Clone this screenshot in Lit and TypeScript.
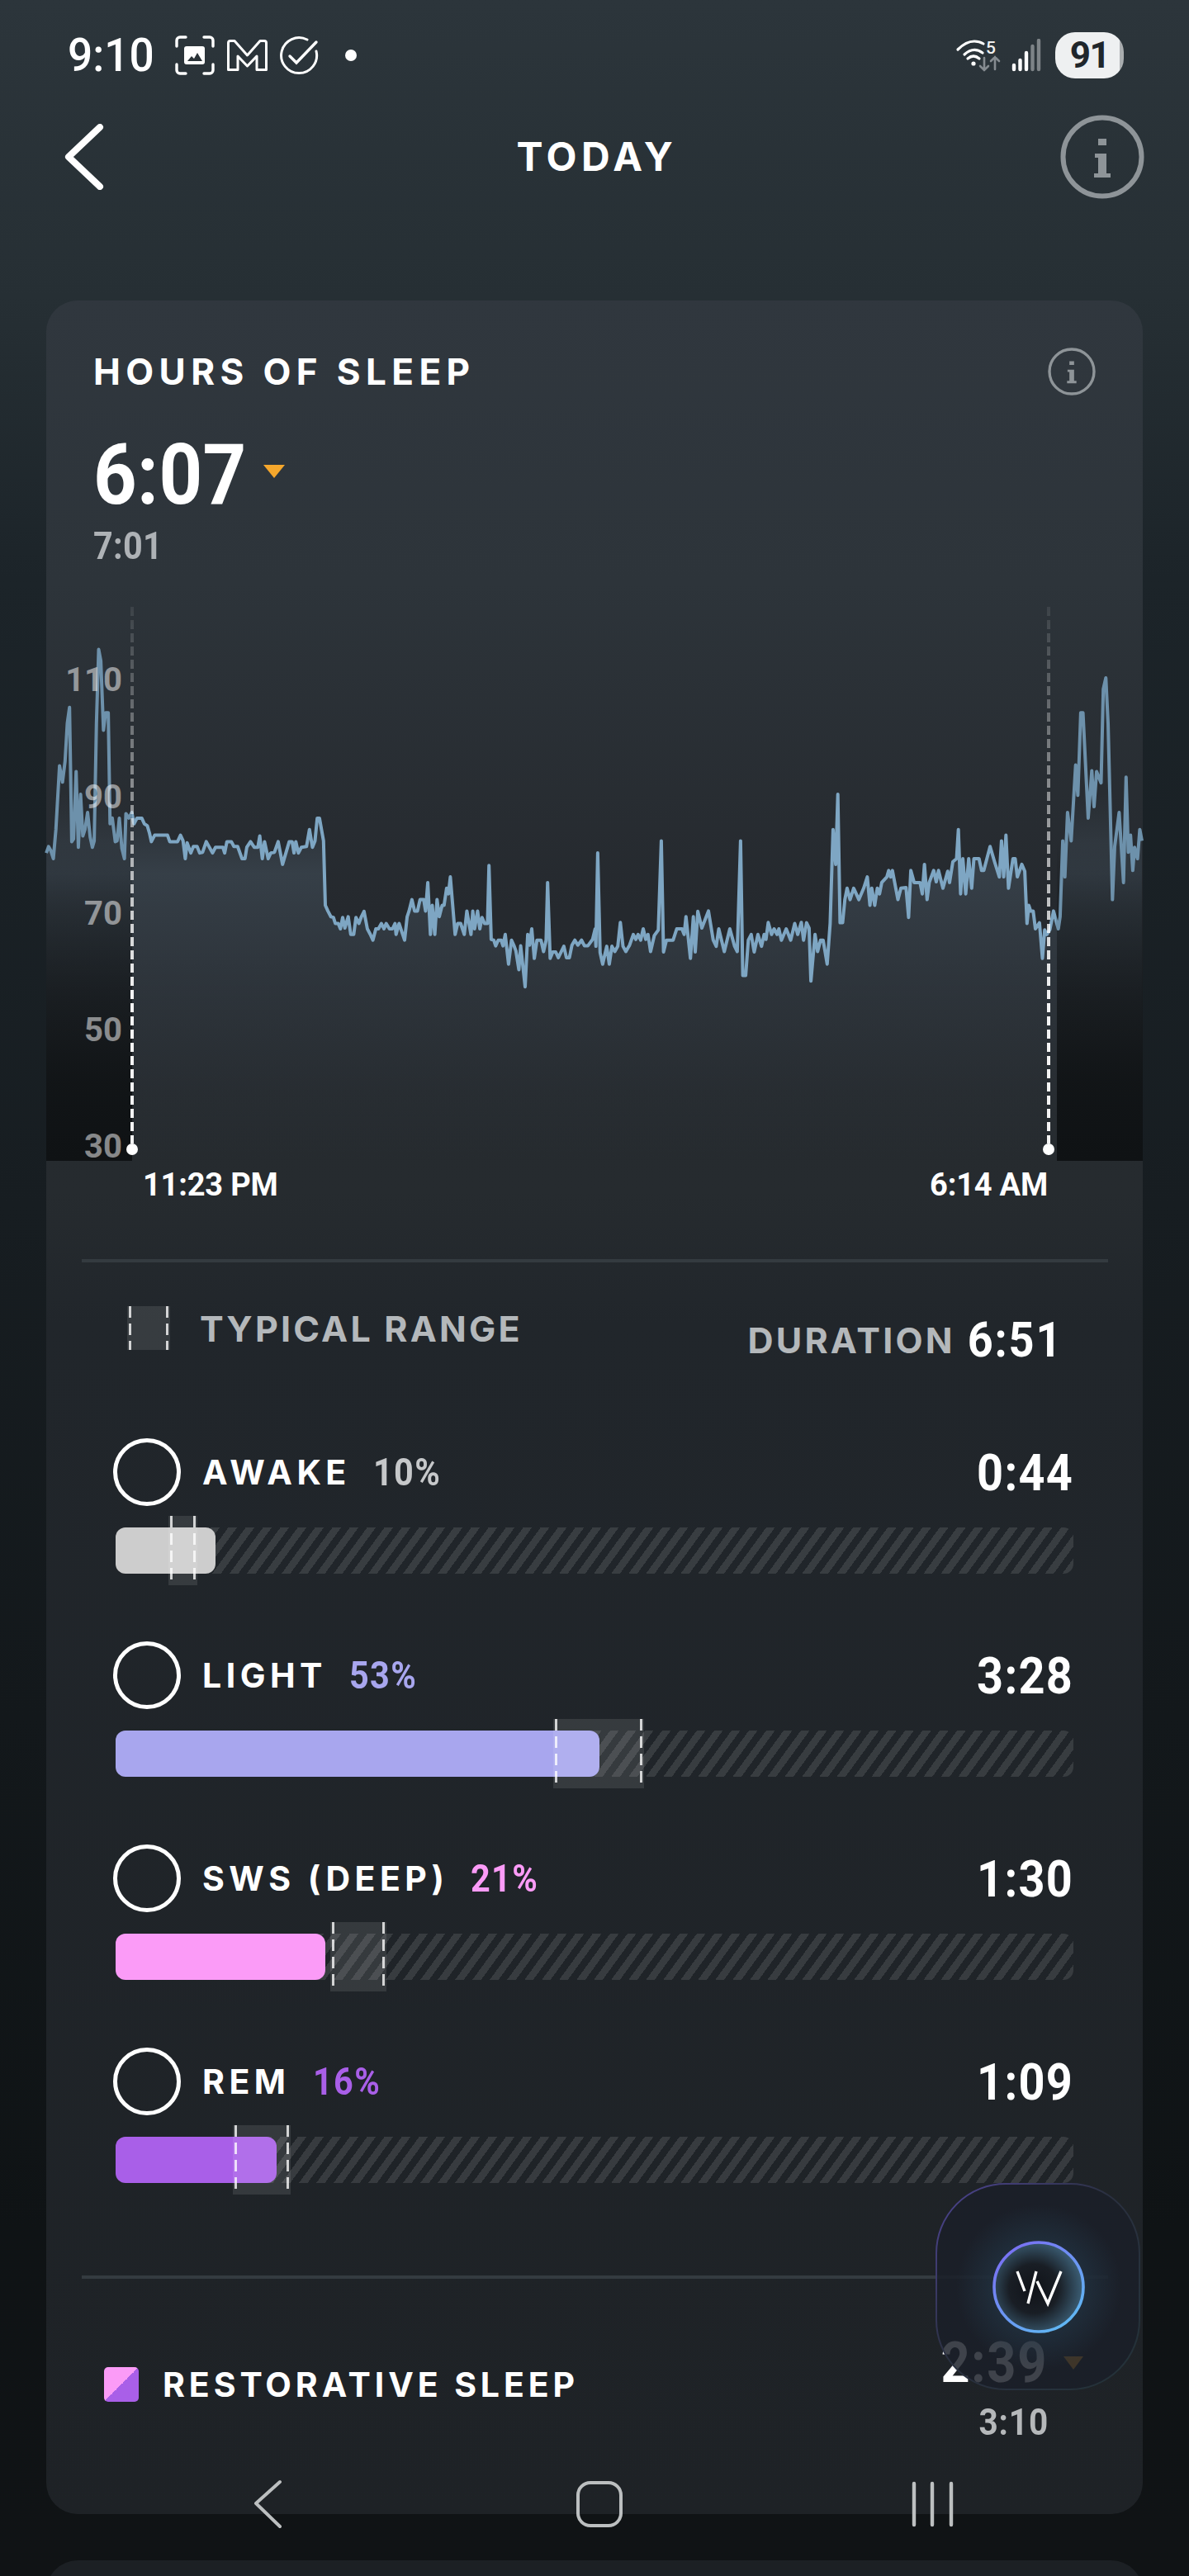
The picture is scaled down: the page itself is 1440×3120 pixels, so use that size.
import { LitElement, html, css, svg } from 'lit';
import { customElement } from 'lit/decorators.js';

interface StageRow {
  label: string;
  pct: string;
  value: string;
  color: string;
  pctColor: string;
  fill: number;
  rangeLeft: number;
  rangeWidth: number;
}

const TRACK_WIDTH = 1160;

const STAGES: StageRow[] = [
  { label: 'AWAKE', pct: '10%', value: '0:44', color: '#cdcdcd', pctColor: '#c6c8ca', fill: 121, rangeLeft: 64, rangeWidth: 35 },
  { label: 'LIGHT', pct: '53%', value: '3:28', color: '#a8a6ee', pctColor: '#a8a6ee', fill: 586, rangeLeft: 530, rangeWidth: 110 },
  { label: 'SWS (DEEP)', pct: '21%', value: '1:30', color: '#fb9bf7', pctColor: '#fb9bf7', fill: 254, rangeLeft: 260, rangeWidth: 68 },
  { label: 'REM', pct: '16%', value: '1:09', color: '#a95fe8', pctColor: '#a95fe8', fill: 195, rangeLeft: 142, rangeWidth: 70 },
];

// traced from the chart, [x, y] in crop units, see toPage()
const LEFT_TRACE = [36,682,42,665,48,675,55,697,62,620,72,452,80,495,87,440,93,340,99,298,105,652,110,645,117,467,123,667,129,527,135,637,141,620,148,575,155,640,161,667,166,650,172,340,178,145,184,175,191,358,197,312,204,312,209,605,215,590,223,652,228,650,234,590,241,670,248,697,252,578,260,590,268,575,274,605,282,590,295,590,302,605,310,610,316,630,321,652,330,635,365,635,371,652,392,652,400,635,407,650,413,697,418,655,428,682,435,665,445,665,452,682,460,680,470,652,487,682,495,667,515,667,520,682,526,652,538,652,545,665,555,665,567,697,575,697,580,667,590,652,600,667,610,667,615,637,622,697,628,652,638,697,645,682,655,680,665,652,677,712,695,652,703,652,708,682,713,652,720,682,728,667,742,665,750,620,758,667,765,650,771,590,777,590,788,650,793,820,800,835,808,850,815,852,820,868,828,868,834,882,840,852,846,880,855,850,862,897,870,897,876,852,884,868,890,852,898,836,907,882,915,897,922,912,930,882,937,882,945,868,952,882,958,868,967,882,975,882,982,868,985,897,993,868,1008,912,1015,850,1020,835,1028,805,1035,835,1043,835,1050,805,1060,805,1065,835,1071,760,1078,897,1083,820,1090,897,1096,805,1102,850,1110,820,1115,820,1122,775,1127,790,1132,745,1145,897,1152,868,1160,868,1170,897,1177,835,1188,897,1193,835,1198,882,1206,835,1212,882,1218,852,1225,868,1233,868,1237,715,1243,910,1250,912,1255,927,1262,912,1270,912,1275,927,1281,897,1290,975,1298,912,1305,927,1310,940,1318,990,1323,927,1335,1035,1342,897,1347,925,1353,882,1360,960,1367,912,1378,912,1385,942,1392,912,1396,760,1403,960,1410,943,1418,943,1425,958,1440,928,1447,958,1455,958,1462,925,1470,912,1478,925,1488,912,1496,927,1505,927,1518,910,1525,882,1527,928,1532,682];

const RIGHT_TRACE = [60,945,67,975,78,928,85,975,92,928,100,942,108,928,115,865,122,928,130,942,140,925,150,897,157,910,163,897,170,912,177,882,184,910,190,897,197,942,207,900,218,885,226,650,232,943,240,912,258,912,268,882,282,882,288,897,293,850,305,960,313,850,318,943,325,836,336,880,354,835,367,912,375,928,382,882,397,942,412,882,425,928,432,942,441,650,447,1005,455,1005,462,912,470,897,478,943,488,897,498,928,505,897,510,910,516,865,525,897,532,882,540,897,545,882,552,912,565,882,577,912,588,868,596,897,606,865,612,912,620,866,627,880,632,1020,643,897,650,942,658,912,665,912,676,975,684,868,692,620,699,712,705,527,711,866,718,866,724,805,730,775,738,805,748,775,762,805,775,775,785,745,792,820,797,775,805,820,812,775,818,790,824,760,838,745,843,728,848,745,853,728,868,805,876,775,890,773,897,852,903,728,912,760,928,760,934,790,940,712,947,805,953,760,965,728,972,758,978,728,990,775,1003,730,1008,760,1017,705,1027,697,1032,620,1038,790,1044,697,1052,790,1060,697,1068,775,1074,697,1088,697,1095,728,1101,728,1118,665,1130,705,1143,745,1149,650,1155,745,1161,635,1168,775,1180,697,1186,697,1192,745,1204,712,1212,730,1218,868,1223,820,1228,835,1235,835,1241,882,1252,866,1260,960,1266,885,1272,897,1280,885,1290,835,1303,882,1308,850,1315,650,1321,745,1328,575,1338,650,1350,450,1356,530,1364,312,1370,312,1384,590,1394,465,1400,560,1407,467,1419,497,1425,250,1432,220,1438,340,1450,805,1456,665,1468,575,1480,760,1487,482,1493,680,1499,635,1505,728,1510,667,1518,697,1524,620,1530,650];

function toPage(trace: number[], originX: number): string[] {
  const out: string[] = [];
  for (let i = 0; i < trace.length; i += 2) {
    out.push(`${(originX + trace[i] / 2.24).toFixed(1)},${(720 + trace[i + 1] / 2.178).toFixed(1)}`);
  }
  return out;
}

const LINE = [...toPage(LEFT_TRACE, 40), ...toPage(RIGHT_TRACE, 700)].join(' ');
const AREA = `56,1406 ${LINE} 1384,1406`;

const AXIS = [
  { label: '110', y: 823 },
  { label: '90', y: 965 },
  { label: '70', y: 1106 },
  { label: '50', y: 1247 },
  { label: '30', y: 1388 },
];

@customElement('app-root')
export class AppRoot extends LitElement {
  static styles = css`
    :host {
      display: block;
      position: relative;
      width: 1440px;
      height: 3120px;
      overflow: hidden;
      font-family: 'Inter', 'Lato', sans-serif;
      color: #fff;
      background: linear-gradient(180deg, #2c353b 0, #262f34 360px, #1c2429 700px, #171d21 1460px, #0f1315 2700px, #101315 3120px);
    }
    svg { display: block; flex: none; }
    .num { font-family: 'Roboto', sans-serif; font-weight: 700; }
    /* the app's digits are narrower than Roboto */
    .narrow { display: inline-block; transform: scaleX(0.9); transform-origin: left center; }
    .narrow.end { transform-origin: right center; }

    .status {
      height: 134px;
      padding: 0 79px 0 82px;
      display: flex;
      align-items: center;
      justify-content: space-between;
    }
    .status-left, .status-right { display: flex; align-items: center; }
    .clock {
      font-family: 'Roboto', sans-serif;
      font-weight: 500;
      font-size: 56px;
      line-height: 60px;
      width: 130px;
      display: inline-block;
      transform: scaleX(0.95);
      transform-origin: left center;
    }
    .battery {
      width: 83px;
      height: 56px;
      margin-left: 17px;
      border-radius: 24px;
      background: linear-gradient(90deg, #eef0f1 94%, #a9adaf 94%);
      color: #1f262b;
      font-family: 'Roboto', sans-serif;
      font-weight: 700;
      font-size: 44px;
      letter-spacing: -1.5px;
      line-height: 56px;
      text-align: center;
    }

    .nav {
      height: 112px;
      padding: 0 54px;
      display: grid;
      grid-template-columns: 1fr auto 1fr;
      align-items: center;
    }
    .nav .back { margin-left: 24px; }
    .nav .info { justify-self: end; }
    .nav h1 {
      margin: 0;
      padding-left: 6px;
      font-size: 48px;
      font-weight: 700;
      letter-spacing: 5.5px;
      line-height: 60px;
    }

    .card {
      margin: 118px 56px 0;
      border-radius: 38px;
      padding-bottom: 87px;
      background: linear-gradient(180deg, #30373e 0, #2d343a 340px, #25292e 740px, #262b2f 1080px, #21262b 1240px, #1e2226 2681px);
    }
    .card-title {
      height: 56px;
      padding: 58px 57px 1px;
      display: flex;
      align-items: center;
      justify-content: space-between;
    }
    .card-title h2 {
      margin: 0;
      font-size: 44px;
      font-weight: 700;
      letter-spacing: 6.4px;
    }
    .score {
      margin: 51px 0 0 57px;
      height: 90px;
      display: flex;
      align-items: center;
      gap: 0;
    }
    .score .num {
      font-size: 102px;
      line-height: 90px;
      letter-spacing: 0.5px;
    }
    .tri {
      width: 0;
      height: 0;
      border-left: 13px solid transparent;
      border-right: 13px solid transparent;
      border-top: 16px solid #f5a72c;
      margin-bottom: 8px;
    }
    .prev {
      margin: 17px 0 35px 57px;
      height: 48px;
      font-size: 46px;
      line-height: 48px;
      letter-spacing: 0.3px;
      color: #aeb2b6;
    }
    .prev .narrow { display: block; }
    .chart-label {
      font-family: 'Roboto', sans-serif;
      font-weight: 700;
      font-size: 40px;
      fill: rgba(255, 255, 255, 0.5);
    }
    .times {
      height: 58px;
      padding: 0 115px 0 117px;
      display: flex;
      align-items: center;
      justify-content: space-between;
      font-size: 38px;
      letter-spacing: -0.2px;
    }
    .rule {
      height: 4px;
      background: #343b40;
      margin-left: 43px;
      margin-right: 42px;
    }
    .legend {
      margin-top: 53px;
      padding: 0 97px 0 98px;
      height: 53px;
      display: flex;
      justify-content: space-between;
    }
    .legend-left { display: flex; align-items: center; gap: 36px; }
    .legend-left span, .duration span {
      font-size: 43px;
      font-weight: 700;
      letter-spacing: 3.2px;
      color: #b4b8bb;
    }
    .duration {
      height: 53px;
      margin-top: 14px;
      display: flex;
      align-items: center;
      gap: 2px;
    }
    .duration .num { font-size: 60px; letter-spacing: 2px; }

    .range-key, .range {
      background: rgba(255, 255, 255, 0.1);
    }
    .range-key {
      position: relative;
      width: 52px;
      height: 53px;
    }
    .range-key::before, .range-key::after, .range::before, .range::after {
      content: '';
      position: absolute;
      top: 0;
      bottom: 0;
      width: 3px;
      background: repeating-linear-gradient(180deg, rgba(255, 255, 255, 0.78) 0 14px, transparent 14px 21px);
    }
    .range-key::before, .range::before { left: 2px; }
    .range-key::after, .range::after { right: 2px; }

    .stages {
      margin-top: 107px;
      padding: 0 84px;
      display: flex;
      flex-direction: column;
      gap: 82px;
    }
    .stage-head {
      height: 82px;
      display: flex;
      align-items: center;
      margin-left: -3px;
    }
    .ring {
      width: 82px;
      height: 82px;
      box-sizing: border-box;
      border: 5px solid #fff;
      border-radius: 50%;
      margin-right: 26px;
    }
    .stage-name {
      font-size: 41px;
      font-weight: 700;
      letter-spacing: 5.5px;
      margin-right: 27px;
    }
    .stage-pct {
      font-family: 'Roboto', sans-serif;
      font-weight: 700;
      font-size: 46px;
      letter-spacing: 1.5px;
    }
    .stage-value { margin-left: auto; font-size: 62px; letter-spacing: 1.5px; }
    .track {
      position: relative;
      height: 56px;
      margin-top: 26px;
      border-radius: 12px;
      background: repeating-linear-gradient(126deg, transparent 0 8.5px, rgba(255, 255, 255, 0.11) 8.5px 17px);
    }
    .fill { height: 100%; border-radius: 12px; }
    .range { position: absolute; top: -14px; bottom: -14px; }

    .rule-2 { margin-top: 112px; }
    .restorative {
      margin-top: 72px;
      padding: 0 72px 0 70px;
      display: flex;
      justify-content: space-between;
      align-items: center;
    }
    .restorative-left {
      display: flex;
      align-items: center;
      gap: 29px;
      padding-bottom: 14px;
    }
    .swatch {
      width: 42px;
      height: 42px;
      border-radius: 5px;
      background: linear-gradient(to bottom right, #fb9bf7 50%, #a95fe8 50%);
    }
    .restorative-left span {
      font-size: 41px;
      font-weight: 700;
      letter-spacing: 4.9px;
    }
    .restorative-right { display: flex; flex-direction: column; align-items: flex-end; }
    .restorative-main { height: 60px; display: flex; align-items: center; gap: 19px; }
    .restorative-main .num { font-size: 68px; letter-spacing: 2px; }
    .restorative-main .tri { margin: 0; border-left-width: 12px; border-right-width: 12px; }
    .restorative-prev {
      margin: 18px 42px 0 0;
      font-size: 45px;
      line-height: 48px;
      letter-spacing: 1px;
      color: #b5b8ba;
    }

    .next-card {
      margin: 56px 56px 0;
      height: 120px;
      border-radius: 38px;
      background: #1c2024;
    }
    .bubble { position: absolute; left: 1133px; top: 2644px; }
    .softkeys { position: absolute; left: 300px; top: 3000px; }
  `;

  private backIcon() {
    return html`<svg class="back" width="50" height="80" viewBox="78 150 50 80" fill="none" stroke="#fff" stroke-width="8" stroke-linecap="round" stroke-linejoin="round">
      <path d="M121 154 L83 190 L121 226" />
    </svg>`;
  }

  private infoIcon(size: number, color: string) {
    return html`<svg width="${size}" height="${size}" viewBox="0 0 102 102">
      <circle cx="51" cy="51" r="47.5" fill="none" stroke="${color}" stroke-width="6" />
      <path fill="${color}" d="M46 29h10v8H46z M42 47h14v24h5v5H41v-5h5V52h-4z" />
    </svg>`;
  }

  private statusLeft() {
    return html`
      <svg width="48" height="48" viewBox="0 0 48 48" fill="none" stroke="#fff" stroke-width="3.4" stroke-linecap="round">
        <path d="M2 13V6a4 4 0 0 1 4-4h7 M35 2h7a4 4 0 0 1 4 4v7 M46 35v7a4 4 0 0 1-4 4h-7 M13 46H6a4 4 0 0 1-4-4v-7" />
        <rect x="11" y="13" width="25" height="22" rx="3" fill="#fff" stroke="none" />
        <path d="M15 31 L20 25 L23 28 L27 21 L33 31Z" fill="#2a3338" stroke="none" />
      </svg>
      <svg style="margin-left:15px" width="49" height="38" viewBox="0 0 49 38" fill="none" stroke="#fff" stroke-width="3" stroke-linejoin="round">
        <path d="M1.5 4Q1.5 1.5 4 1.5H9L24.5 19 40 1.5h5Q47.5 1.5 47.5 4V36.5H36V20L24.5 32 13 20V36.5H1.5Z" />
      </svg>
      <svg style="margin-left:14px" width="48" height="48" viewBox="0 0 48 48" fill="none" stroke="#fff" stroke-width="3" stroke-linecap="round">
        <path d="M34 5A21.5 21.5 0 1 0 45 19" />
        <path d="M13 25 L21 33 L45 8" stroke-width="3.4" />
      </svg>
      <svg style="margin-left:32px" width="14" height="14" viewBox="0 0 14 14"><circle cx="7" cy="7" r="7" fill="#fff" /></svg>
    `;
  }

  private statusRight() {
    return html`
      <svg width="57" height="42" viewBox="1155 48 57 42" fill="none" stroke="#fff" stroke-width="3.2" stroke-linecap="round">
        <path d="M1160 62Q1170 52 1180 52 1186 52 1191 55" />
        <path d="M1168 68Q1179 58 1190 66" />
        <path d="M1172 73Q1179 67 1186 73" />
        <circle cx="1179" cy="79" r="2.6" fill="#fff" stroke="none" />
        <text x="1194" y="67" font-family="Roboto" font-weight="500" font-size="21" fill="#f0f0f0" stroke="none">5</text>
        <g stroke="#858b90" stroke-width="2.6">
          <path d="M1192 72V87 M1187 82L1192 87 1197 82" />
          <path d="M1205 86V71 M1200 76L1205 71 1210 76" />
        </g>
      </svg>
      <svg style="margin-left:13px" width="36" height="40" viewBox="1225 48 36 40" stroke-width="4.4" stroke-linecap="round">
        <path stroke="#fff" d="M1228 85V80 M1235.500 85V74 M1243 85V65" />
        <path stroke="#7d8387" d="M1250.500 85V57 M1258 85V50" />
      </svg>
    `;
  }

  private chart() {
    return html`<svg width="1328" height="686" viewBox="56 720 1328 686" style="overflow:visible">
      <defs>
        <linearGradient id="area" gradientUnits="userSpaceOnUse" x1="0" x2="0" y1="960" y2="1406">
          <stop offset="0" stop-color="#3c4751" stop-opacity="0" />
          <stop offset="0.22" stop-color="#3c4751" stop-opacity="0.72" />
          <stop offset="0.5" stop-color="#3c4751" stop-opacity="0.38" />
          <stop offset="0.8" stop-color="#3c4751" stop-opacity="0.1" />
          <stop offset="1" stop-color="#3c4751" stop-opacity="0" />
        </linearGradient>
        <linearGradient id="side" gradientUnits="userSpaceOnUse" x1="0" x2="0" y1="1020" y2="1406">
          <stop offset="0" stop-color="#0f1214" stop-opacity="0" />
          <stop offset="0.2" stop-color="#0f1214" stop-opacity="0.32" />
          <stop offset="0.5" stop-color="#0f1214" stop-opacity="0.66" />
          <stop offset="0.75" stop-color="#0f1214" stop-opacity="0.9" />
          <stop offset="1" stop-color="#0f1214" stop-opacity="1" />
        </linearGradient>
        <linearGradient id="trace" gradientUnits="userSpaceOnUse" x1="56" x2="1384" y1="0" y2="0">
          <stop offset="0.078" stop-color="#6d91ab" />
          <stop offset="0.078" stop-color="#7ea6c3" />
          <stop offset="0.921" stop-color="#7ea6c3" />
          <stop offset="0.921" stop-color="#6d91ab" />
        </linearGradient>
        <linearGradient id="dash" gradientUnits="userSpaceOnUse" x1="0" x2="0" y1="735" y2="1388">
          <stop offset="0" stop-color="#fff" stop-opacity="0.08" />
          <stop offset="0.42" stop-color="#fff" stop-opacity="0.55" />
          <stop offset="0.72" stop-color="#fff" stop-opacity="0.95" />
        </linearGradient>
      </defs>
      <polygon points="${AREA}" fill="url(#area)" />
      <rect x="56" y="1020" width="104" height="386" fill="url(#side)" />
      <rect x="1280" y="1020" width="104" height="386" fill="url(#side)" />
      <polyline points="${LINE}" fill="none" stroke="url(#trace)" stroke-width="4" stroke-linejoin="round" />
      ${[160, 1270].map(
        (x) => svg`
          <rect x="${x - 2}" y="735" width="4" height="650" fill="url(#dash)" mask="url(#dashes)" />
          <circle cx="${x}" cy="1392" r="7" fill="#fff" />
        `,
      )}
      <mask id="dashes" maskUnits="userSpaceOnUse" x="56" y="720" width="1328" height="686">
        <line x1="160" x2="160" y1="735" y2="1385" stroke="#fff" stroke-width="4" stroke-dasharray="11 5" />
        <line x1="1270" x2="1270" y1="735" y2="1385" stroke="#fff" stroke-width="4" stroke-dasharray="11 5" />
      </mask>
      ${AXIS.map(
        (a) => svg`<text class="chart-label" x="148" y="${a.y + 14}" text-anchor="end">${a.label}</text>`,
      )}
    </svg>`;
  }

  private stage(s: StageRow) {
    return html`<div class="stage">
      <div class="stage-head">
        <div class="ring"></div>
        <span class="stage-name">${s.label}</span>
        <span class="stage-pct narrow" style="color:${s.pctColor}">${s.pct}</span>
        <span class="stage-value num narrow end">${s.value}</span>
      </div>
      <div class="track">
        <div class="fill" style="width:${(s.fill / TRACK_WIDTH) * 100}%;background:${s.color}"></div>
        <div
          class="range"
          style="left:${(s.rangeLeft / TRACK_WIDTH) * 100}%;width:${(s.rangeWidth / TRACK_WIDTH) * 100}%"
        ></div>
      </div>
    </div>`;
  }

  private bubble() {
    return html`<svg class="bubble" width="248" height="251" viewBox="1133 2644 248 251">
      <defs>
        <linearGradient id="edge" x1="0" y1="0" x2="1" y2="1">
          <stop offset="0" stop-color="#4f4596" />
          <stop offset="0.45" stop-color="#2a3040" />
          <stop offset="1" stop-color="#233238" />
        </linearGradient>
        <radialGradient id="glow" gradientUnits="userSpaceOnUse" cx="1258" cy="2770" r="100">
          <stop offset="0.5" stop-color="#24394a" stop-opacity="0.6" />
          <stop offset="1" stop-color="#24394a" stop-opacity="0" />
        </radialGradient>
        <radialGradient id="core" gradientUnits="userSpaceOnUse" cx="1252" cy="2772" r="60">
          <stop offset="0" stop-color="#101319" />
          <stop offset="0.5" stop-color="#191e25" />
          <stop offset="1" stop-color="#3c5f76" />
        </radialGradient>
        <linearGradient id="halo" x1="0.1" y1="0" x2="0.85" y2="1">
          <stop offset="0" stop-color="#7b6bf3" />
          <stop offset="1" stop-color="#5ebcf3" />
        </linearGradient>
      </defs>
      <rect x="1134" y="2645" width="246" height="249" rx="84" fill="#1a1f28" fill-opacity="0.84" stroke="url(#edge)" stroke-width="2" />
      <circle cx="1258" cy="2770" r="100" fill="url(#glow)" />
      <circle cx="1258" cy="2770" r="54" fill="url(#core)" stroke="url(#halo)" stroke-width="3.6" />
      <path d="M1232 2751L1241 2775 M1255 2751L1245 2790 M1256 2763L1269 2790 1285 2751" fill="none" stroke="#fff" stroke-width="3.4" />
    </svg>`;
  }

  private softkeys() {
    return html`<svg class="softkeys" width="870" height="70" viewBox="300 3000 870 70" fill="none" stroke="#bcbfc0" stroke-linecap="round" stroke-linejoin="round">
      <path d="M339 3006L310 3032 339 3060" stroke-width="4" />
      <rect x="700" y="3007" width="52" height="52" rx="15" stroke-width="4" />
      <path d="M1107 3008V3058 M1129 3008V3058 M1152 3008V3058" stroke-width="4.4" />
    </svg>`;
  }

  render() {
    return html`
      <div class="status">
        <div class="status-left">
          <span class="clock">9:10</span>
          ${this.statusLeft()}
        </div>
        <div class="status-right">
          ${this.statusRight()}
          <div class="battery">91</div>
        </div>
      </div>
      <div class="nav">
        ${this.backIcon()}
        <h1>TODAY</h1>
        <div class="info">${this.infoIcon(102, '#8e9498')}</div>
      </div>

      <div class="card">
        <div class="card-title">
          <h2>HOURS OF SLEEP</h2>
          ${this.infoIcon(58, '#8e9498')}
        </div>
        <div class="score">
          <span class="num narrow">6:07</span>
          <span class="tri"></span>
        </div>
        <div class="prev num"><span class="narrow">7:01</span></div>
        ${this.chart()}
        <div class="times num">
          <span>11:23 PM</span>
          <span>6:14 AM</span>
        </div>
        <div class="rule" style="margin-top:61px"></div>
        <div class="legend">
          <div class="legend-left">
            <div class="range-key"></div>
            <span>TYPICAL RANGE</span>
          </div>
          <div class="duration">
            <span>DURATION</span>
            <b class="num narrow end">6:51</b>
          </div>
        </div>
        <div class="stages">${STAGES.map((s) => this.stage(s))}</div>
        <div class="rule rule-2"></div>
        <div class="restorative">
          <div class="restorative-left">
            <div class="swatch"></div>
            <span>RESTORATIVE SLEEP</span>
          </div>
          <div class="restorative-right">
            <div class="restorative-main">
              <span class="num narrow end">2:39</span>
              <span class="tri"></span>
            </div>
            <div class="restorative-prev num narrow end">3:10</div>
          </div>
        </div>
      </div>
      <div class="next-card"></div>

      ${this.bubble()} ${this.softkeys()}
    `;
  }
}
